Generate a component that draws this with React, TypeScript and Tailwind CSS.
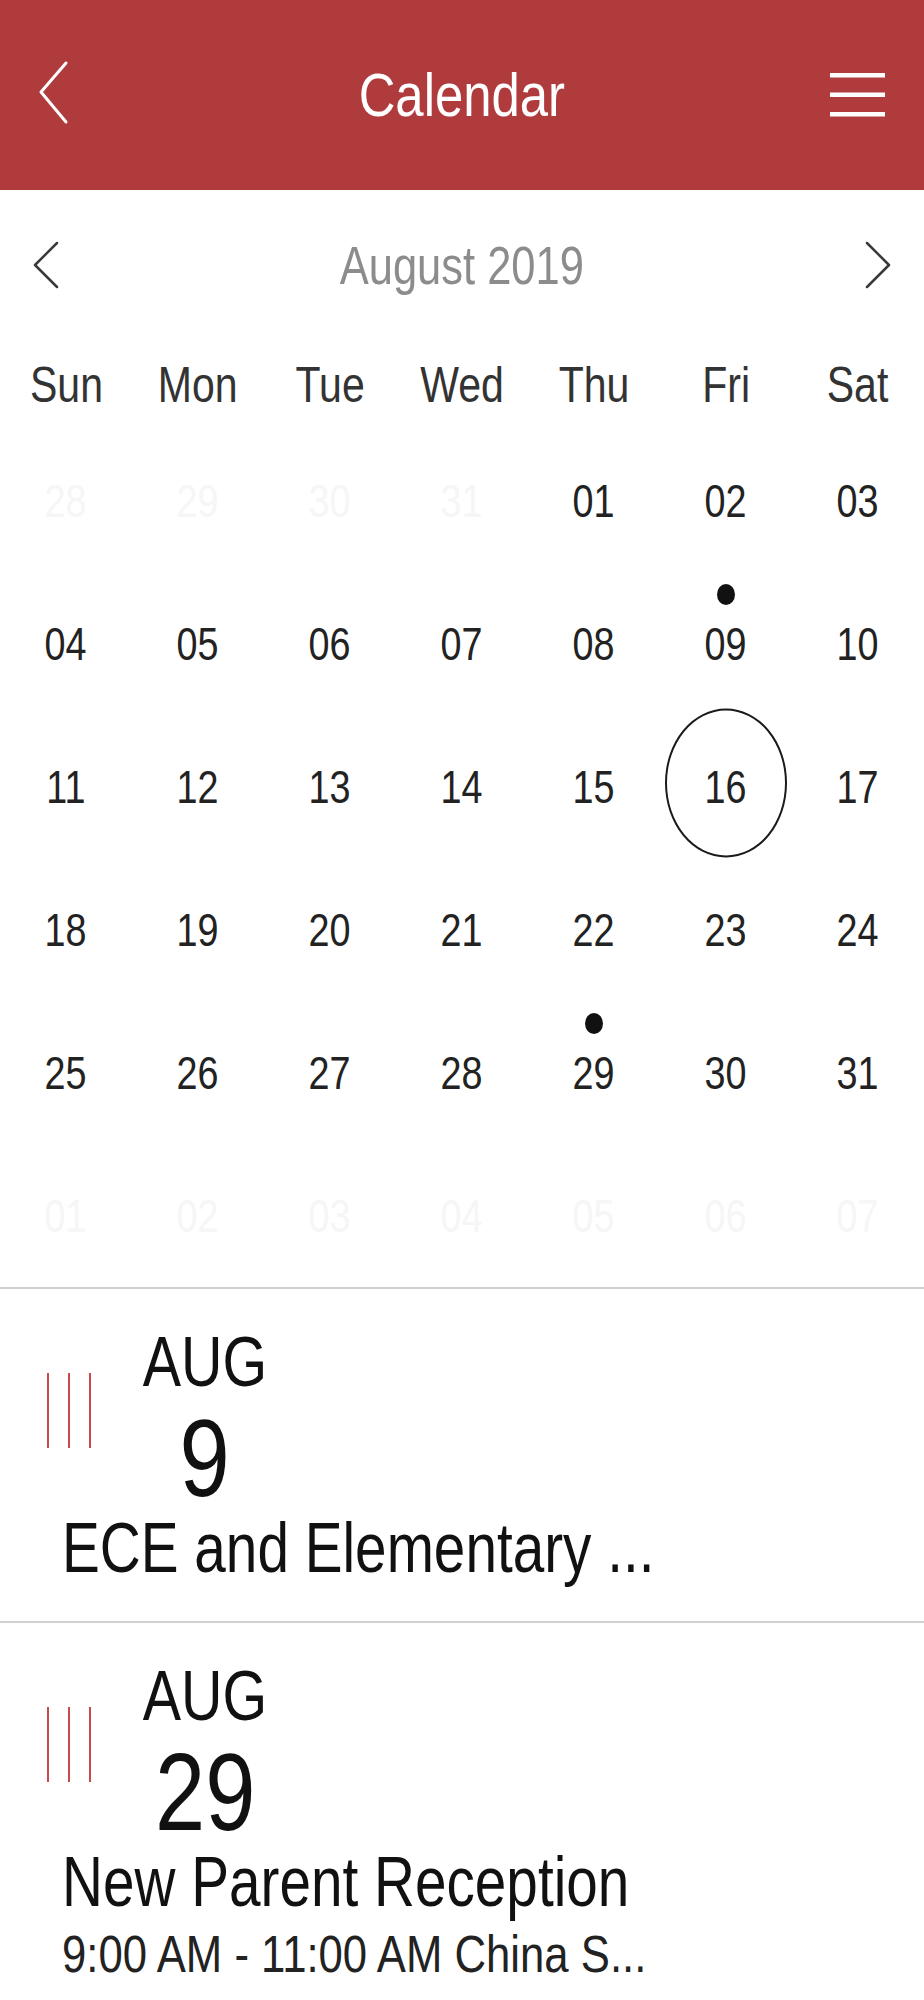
import React from "react";

const FONT = {
  fontFamily: '"Liberation Sans", Arial, sans-serif',
};

type Cell = { d: string; muted?: boolean; dot?: boolean; selected?: boolean };

const rows: Cell[][] = [
  [
    { d: "28", muted: true },
    { d: "29", muted: true },
    { d: "30", muted: true },
    { d: "31", muted: true },
    { d: "01" },
    { d: "02" },
    { d: "03" },
  ],
  [
    { d: "04" },
    { d: "05" },
    { d: "06" },
    { d: "07" },
    { d: "08" },
    { d: "09", dot: true },
    { d: "10" },
  ],
  [
    { d: "11" },
    { d: "12" },
    { d: "13" },
    { d: "14" },
    { d: "15" },
    { d: "16", selected: true },
    { d: "17" },
  ],
  [
    { d: "18" },
    { d: "19" },
    { d: "20" },
    { d: "21" },
    { d: "22" },
    { d: "23" },
    { d: "24" },
  ],
  [
    { d: "25" },
    { d: "26" },
    { d: "27" },
    { d: "28" },
    { d: "29", dot: true },
    { d: "30" },
    { d: "31" },
  ],
  [
    { d: "01", muted: true },
    { d: "02", muted: true },
    { d: "03", muted: true },
    { d: "04", muted: true },
    { d: "05", muted: true },
    { d: "06", muted: true },
    { d: "07", muted: true },
  ],
];

const weekdays = ["Sun", "Mon", "Tue", "Wed", "Thu", "Fri", "Sat"];

function RedLines() {
  return (
    <div className="flex w-[140px] shrink-0 pl-[47px] gap-[19px] pt-[46px]">
      <div className="w-[2px] h-[75px] bg-[#c84a4a]" />
      <div className="w-[2px] h-[75px] bg-[#c84a4a]" />
      <div className="w-[2px] h-[75px] bg-[#c84a4a]" />
    </div>
  );
}

function EventItem({
  day,
  title,
  sub,
}: {
  day: string;
  title: string;
  sub?: string;
}) {
  return (
    <div className="pt-[38px] pb-[38px] text-[#111]">
      <div className="flex">
        <RedLines />
        <div className="w-[130px] flex flex-col items-center">
          <span className="inline-block scale-x-[0.82] text-[70px] leading-none">AUG</span>
          <span className="inline-block scale-x-[0.82] text-[110px] leading-none mt-[6px]">
            {day}
          </span>
        </div>
      </div>
      <div className="pl-[62px] text-[70px] leading-none whitespace-nowrap">
        <span className="inline-block scale-x-[0.81] origin-left">{title}</span>
      </div>
      {sub && (
        <div className="pl-[62px] mt-[11px] text-[52px] leading-none whitespace-nowrap text-[#222]">
          <span className="inline-block scale-x-[0.84] origin-left">{sub}</span>
        </div>
      )}
    </div>
  );
}

export default function App() {
  return (
    <div className="w-[924px] min-h-[2000px] bg-white overflow-hidden" style={FONT}>
      {/* Header */}
      <div className="h-[190px] bg-[#b03b3d] flex items-center">
        <div className="w-[150px] pl-[38px] flex items-center -mt-[5px]">
          <svg width="31" height="65" viewBox="0 0 31 65" fill="none">
            <polyline
              points="28,3 3,32 28,62"
              stroke="#ffffff"
              strokeWidth="3"
              strokeLinecap="round"
              strokeLinejoin="round"
            />
          </svg>
        </div>
        <div className="flex-1 text-center text-white text-[62px] leading-none">
          <span className="inline-block scale-x-[0.82]">Calendar</span>
        </div>
        <div className="w-[150px] pr-[39px] flex justify-end">
          <svg width="55" height="44" viewBox="0 0 55 44" fill="none">
            <rect x="0" y="0" width="55" height="4.5" fill="#ffffff" />
            <rect x="0" y="19.5" width="55" height="4.5" fill="#ffffff" />
            <rect x="0" y="39" width="55" height="4.5" fill="#ffffff" />
          </svg>
        </div>
      </div>

      {/* Month nav */}
      <div className="h-[150px] flex items-center px-[32px]">
        <svg width="28" height="50" viewBox="0 0 28 50" fill="none">
          <polyline
            points="25,3 3,25 25,47"
            stroke="#3a3a3a"
            strokeWidth="2.5"
            strokeLinecap="round"
            strokeLinejoin="round"
          />
        </svg>
        <div className="flex-1 text-center text-[53px] leading-none text-[#8c8c8c]">
          <span className="inline-block scale-x-[0.82]">August 2019</span>
        </div>
        <svg width="28" height="50" viewBox="0 0 28 50" fill="none">
          <polyline
            points="3,3 25,25 3,47"
            stroke="#3a3a3a"
            strokeWidth="2.5"
            strokeLinecap="round"
            strokeLinejoin="round"
          />
        </svg>
      </div>

      {/* Weekdays */}
      <div className="h-[89px] grid grid-cols-7 items-center">
        {weekdays.map((w) => (
          <div key={w} className="text-center text-[50px] leading-none text-[#333]">
            <span className="inline-block scale-x-[0.82]">{w}</span>
          </div>
        ))}
      </div>

      {/* Days */}
      <div className="grid grid-cols-7">
        {rows.flat().map((c, i) => (
          <div
            key={i}
            className="relative h-[143px] flex items-center justify-center"
          >
            {c.dot && (
              <div className="absolute top-[12px] left-1/2 -translate-x-1/2 w-[18px] h-[21px] rounded-[50%] bg-[#111]" />
            )}
            {c.selected && (
              <div className="absolute top-1/2 left-1/2 -translate-x-1/2 -translate-y-1/2 -mt-[4px] w-[122px] h-[149px] rounded-[50%] border-2 border-[#1a1a1a]" />
            )}
            <span
              className={
                "relative inline-block scale-x-[0.82] text-[46px] leading-none " +
                (c.muted ? "text-[#f6f6f6]" : "text-[#222]")
              }
            >
              {c.d}
            </span>
          </div>
        ))}
      </div>

      <div className="h-[2px] bg-[#d0d0d0]" />
      <EventItem day="9" title="ECE and Elementary ..." />
      <div className="h-[2px] bg-[#d0d0d0]" />
      <EventItem
        day="29"
        title="New Parent Reception"
        sub="9:00 AM - 11:00 AM China S..."
      />
    </div>
  );
}
